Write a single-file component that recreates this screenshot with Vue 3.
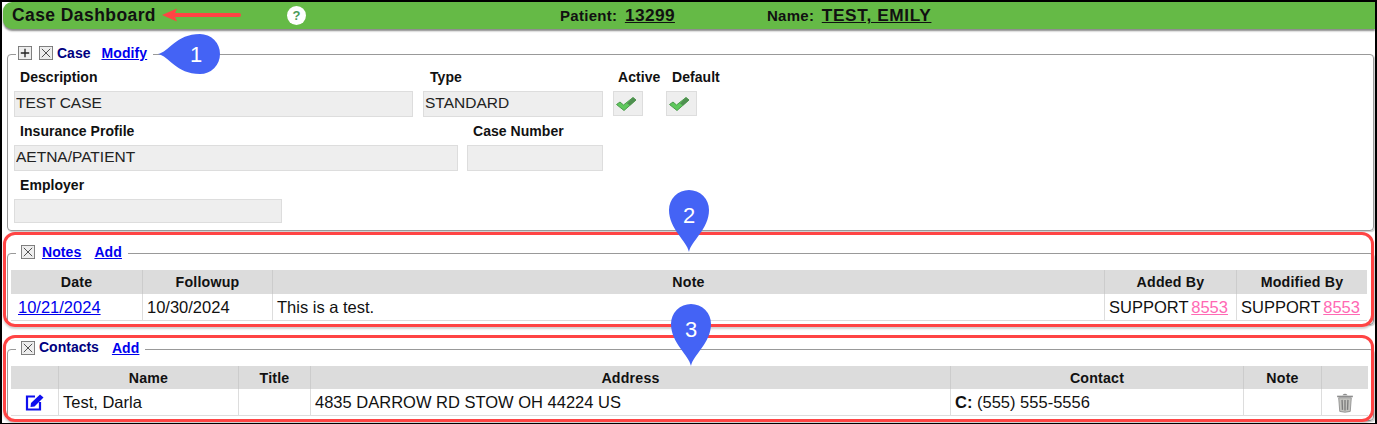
<script setup>
const notes = [{ date: '10/21/2024', followup: '10/30/2024', note: 'This is a test.', added: 'SUPPORT', modified: 'SUPPORT', id: '8553' }]
const contacts = [{ name: 'Test, Darla', title: '', address: '4835 DARROW RD STOW OH 44224 US', phone: '(555) 555-5556', note: '' }]
</script>

<template>
  <div class="frame">
    <header class="topbar">
      <h1 class="title">Case Dashboard</h1>
      <svg class="arrow" width="82" height="14" viewBox="0 0 82 14">
        <path d="M1 7 L16 .5 L14 5 H78 a2 2 0 0 1 0 4 H14 L16 13.500 Z" fill="#ff4444" />
      </svg>
      <span class="help">?</span>
      <span class="patient">Patient: <u class="big">13299</u></span>
      <span class="name">Name: <u class="big wide">TEST, EMILY</u></span>
    </header>

    <fieldset class="box case">
      <legend class="legend lg-case">
        <svg class="tog" width="14" height="14" viewBox="0 0 15 15">
          <rect x=".5" y=".5" width="14" height="14" fill="#eee" stroke="#777" />
          <path d="M7.500 3v9M3 7.500h9" stroke="#222" stroke-width="1.400" />
        </svg>
        <svg class="tog second" width="14" height="14" viewBox="0 0 15 15">
          <rect x=".5" y=".5" width="14" height="14" fill="#eee" stroke="#777" />
          <path d="M3 3l9 9M12 3l-9 9" stroke="#444" stroke-width="1" />
        </svg>
        <b class="lg-title">Case</b>
        <a class="lg-link first">Modify</a>
      </legend>
      <div class="form-row">
        <label class="field w399"><span>Description</span><input readonly value="TEST CASE" /></label>
        <label class="field w180 type"><span>Type</span><input readonly value="STANDARD" /></label>
        <div class="field w30 active"><span>Active</span>
          <div class="checkbox">
            <svg width="22" height="16" viewBox="0 0 22 16">
              <path d="M1.500 8.500 L5 6 L8.500 9 L18 1.500 L21 4 L9 14.500 Z" fill="#5ec85c" stroke="#4d9a4c" stroke-width="1" />
              <path d="M12 7.500 L18 1.500 L21 4 L15 9.500 Z" fill="#4f8f50" />
            </svg>
          </div>
        </div>
        <div class="field w31 default"><span>Default</span>
          <div class="checkbox">
            <svg width="22" height="16" viewBox="0 0 22 16">
              <path d="M1.500 8.500 L5 6 L8.500 9 L18 1.500 L21 4 L9 14.500 Z" fill="#5ec85c" stroke="#4d9a4c" stroke-width="1" />
              <path d="M12 7.500 L18 1.500 L21 4 L15 9.500 Z" fill="#4f8f50" />
            </svg>
          </div>
        </div>
      </div>
      <div class="form-row">
        <label class="field w444"><span>Insurance Profile</span><input readonly value="AETNA/PATIENT" /></label>
        <label class="field w136 casenum"><span>Case Number</span><input readonly value="" /></label>
      </div>
      <div class="form-row last">
        <label class="field w268"><span>Employer</span><input class="short" readonly value="" /></label>
      </div>
    </fieldset>

    <fieldset class="box notes">
      <legend class="legend solo">
        <svg class="tog" width="14" height="14" viewBox="0 0 15 15">
          <rect x=".5" y=".5" width="14" height="14" fill="#eee" stroke="#777" />
          <path d="M3 3l9 9M12 3l-9 9" stroke="#444" stroke-width="1" />
        </svg>
        <a class="lg-link notes-link">Notes</a>
        <a class="lg-link add">Add</a>
      </legend>
      <table class="grid">
        <colgroup>
          <col class="n1" /><col class="n2" /><col /><col class="n4" /><col class="n5" />
        </colgroup>
        <thead>
          <tr><th>Date</th><th>Followup</th><th>Note</th><th>Added By</th><th>Modified By</th></tr>
        </thead>
        <tbody>
          <tr v-for="n in notes" :key="n.date">
            <td class="date-cell"><a class="date">{{ n.date }}</a></td>
            <td>{{ n.followup }}</td>
            <td>{{ n.note }}</td>
            <td>{{ n.added }} <a class="pink">{{ n.id }}</a></td>
            <td>{{ n.modified }} <a class="pink">{{ n.id }}</a></td>
          </tr>
        </tbody>
      </table>
    </fieldset>

    <fieldset class="box contacts">
      <legend class="legend solo">
        <svg class="tog" width="14" height="14" viewBox="0 0 15 15">
          <rect x=".5" y=".5" width="14" height="14" fill="#eee" stroke="#777" />
          <path d="M3 3l9 9M12 3l-9 9" stroke="#444" stroke-width="1" />
        </svg>
        <b class="lg-title raised">Contacts</b>
        <a class="lg-link add">Add</a>
      </legend>
      <table class="grid tall">
        <colgroup>
          <col class="c1" /><col class="c2" /><col class="c3" /><col class="c4" /><col class="c5" /><col class="c6" /><col />
        </colgroup>
        <thead>
          <tr><th></th><th>Name</th><th>Title</th><th>Address</th><th>Contact</th><th>Note</th><th></th></tr>
        </thead>
        <tbody>
          <tr v-for="c in contacts" :key="c.name">
            <td class="center icon-cell">
              <svg width="20" height="18" viewBox="0 0 20 18">
                <path d="M10 3.500 H2 V16.500 H15 V9" fill="none" stroke="#0f0fee" stroke-width="2.200" />
                <path d="M6 10 L15 1.500 L18.500 4.500 L9.500 13.500 L5.500 14 Z" fill="#0f0fee" />
              </svg>
            </td>
            <td>{{ c.name }}</td>
            <td>{{ c.title }}</td>
            <td>{{ c.address }}</td>
            <td><b>C:</b> {{ c.phone }}</td>
            <td>{{ c.note }}</td>
            <td class="center icon-cell">
              <svg width="20" height="21" viewBox="0 0 18 20">
                <path d="M1.500 3.500 H16.500 V5 H1.500 Z" fill="#8d8d8d" />
                <path d="M6.500 3 Q9 .5 11.500 3 Z" fill="#8d8d8d" />
                <path d="M3 5.500 H15 L14 18.500 Q9 20 4 18.500 Z" fill="#c4c4c0" stroke="#8c8c8c" stroke-width=".8" />
                <path d="M6.200 7.500 L6.600 17 M9 7.500 V17.500 M11.800 7.500 L11.400 17" stroke="#7d7d7d" stroke-width="1.300" />
              </svg>
            </td>
          </tr>
        </tbody>
      </table>
    </fieldset>

    <div class="redbox red1"></div>
    <div class="redbox red2"></div>

    <svg class="pin pin1" width="64" height="42" viewBox="0 0 64 42">
      <path d="M1 21 C12 19 19 1 43 1 A20 20 0 0 1 43 41 C19 41 12 23 1 21 Z" fill="#4463f5" />
      <text x="39" y="29" text-anchor="middle" class="pin-num">1</text>
    </svg>
    <svg class="pin pin2" width="42" height="64" viewBox="0 0 42 64">
      <path d="M21 63 C19 52 1 40 1 21 A20 20 0 0 1 41 21 C41 40 23 52 21 63 Z" fill="#4463f5" />
      <text x="21" y="34" text-anchor="middle" class="pin-num">2</text>
    </svg>
    <svg class="pin pin3" width="42" height="64" viewBox="0 0 42 64">
      <path d="M21 63 C19 52 1 40 1 21 A20 20 0 0 1 41 21 C41 40 23 52 21 63 Z" fill="#4463f5" />
      <text x="21" y="34" text-anchor="middle" class="pin-num">3</text>
    </svg>
  </div>
</template>

<style>
html, body { margin: 0; background: #fff; }
</style>

<style scoped>
.frame {
  position: relative;
  box-sizing: border-box;
  width: 1377px;
  height: 424px;
  overflow: hidden;
  border: 2px solid #000;
  border-bottom-width: 1px;
  background: #fff;
  font-family: "Liberation Sans", Arial, sans-serif;
  color: #111;
}
.topbar {
  display: flex;
  align-items: center;
  height: 27px;
  margin-left: 1px;
  padding-left: 9px;
  background: #65ba46;
  border-radius: 9px 0 0 9px;
  box-shadow: 0 2px 2px #888;
  font-weight: bold;
  font-size: 15px;
  letter-spacing: .3px;
}
.title { margin: 0; width: 144px; font-size: 17.500px; letter-spacing: .42px; white-space: nowrap; }
.arrow { margin: -2px 0 0 5px; }
.help {
  display: flex;
  align-items: center;
  justify-content: center;
  width: 19px;
  height: 19px;
  margin-left: 44px;
  border-radius: 50%;
  background: #fff;
  color: #4a9a5a;
  font-size: 13px;
}
.patient { margin-left: 254px; }
.name { margin-left: 92px; }
.big { margin-left: 3px; font-size: 17.300px; letter-spacing: .4px; }
.wide { letter-spacing: .6px; }

.box {
  margin: 0 1px 0 5px;
  padding: 0;
  border: 1px solid #999;
  border-radius: 4px;
  min-width: 0;
  box-shadow: 1px 1px 1px #ccc;
}
.case { margin-top: 17px; height: 185px; box-sizing: border-box; padding: 5px 0 0 6px; }
.notes { margin-top: 14px; height: 80px; box-sizing: border-box; padding: 9px 6px 0 3px; }
.contacts { margin-top: 16px; height: 80px; box-sizing: border-box; padding: 9px 5px 0 3px; }

.legend {
  display: flex;
  align-items: center;
  height: 16px;
  margin-left: 5px;
  padding: 0 6px 0 5px;
  font-size: 14px;
}
.lg-case { margin-left: 2px; padding-left: 2px; }
.tog { flex: none; margin-top: -2px; }
.second { margin-left: 7px; }
.lg-title { margin: -2px 0 0 4px; color: #000080; }
.raised { margin-top: -4px; }
.lg-link { margin-top: -2px; color: #0000ee; font-size: 14px; letter-spacing: .1px; font-weight: bold; text-decoration: underline; }
.first { margin-left: 11px; }
.notes-link { margin-left: 7px; }
.add { margin-left: 13px; }

.form-row { display: flex; }
.field { display: flex; flex-direction: column; flex: none; }
.field span {
  height: 20px;
  line-height: 21px;
  padding-left: 6px;
  font-size: 14px;
  font-weight: bold;
  letter-spacing: .05px;
  white-space: nowrap;
}
.field input {
  box-sizing: border-box;
  display: block;
  width: 100%;
  height: 26px;
  margin: 4px 0;
  padding: 0 1px 3px;
  border: 1px solid #ddd;
  background: #eee;
  font: 15.500px "Liberation Sans", Arial, sans-serif;
  color: #222;
  outline: none;
}
.field input.short { height: 24px; margin-bottom: 0; }
.w399 { width: 399px; }
.w180 { width: 180px; }
.w30 { width: 30px; }
.w31 { width: 31px; }
.w444 { width: 444px; }
.w136 { width: 136px; }
.w268 { width: 268px; }
.type { margin-left: 10px; }
.type span { padding-left: 7px; }
.active { margin-left: 10px; }
.default { margin-left: 23px; }
.casenum { margin-left: 9px; }
.active span { padding-left: 5px; }
.default span { padding-left: 6px; }
.checkbox {
  box-sizing: border-box;
  display: flex;
  align-items: center;
  justify-content: center;
  height: 25px;
  margin-top: 4px;
  border: 1px solid #ddd;
  background: #eee;
  padding-right: 5px;
}

.grid {
  width: 1356px;
  border-collapse: separate;
  border-spacing: 0;
  table-layout: fixed;
  font-size: 16.500px;
}
.tall { width: 1357px; }
.grid th {
  height: 24px;
  padding: 0;
  background: #dcdcdc;
  border-right: 1px solid #ccc;
  font-size: 14.200px;
  letter-spacing: .2px;
}
.tall th { height: 23px; }
.grid th:last-child, .grid td:last-child { border-right: none; }
.grid td {
  height: 27px;
  box-sizing: border-box;
  padding: 0 4px;
  border-right: 1px solid #ddd;
  border-bottom: 1px solid #ddd;
  white-space: nowrap;
  overflow: hidden;
}
.grid .center { text-align: center; }
.grid .date-cell { padding-left: 7px; }
.icon-cell svg { display: block; margin: 0 auto; }
.date { color: #0000ee; text-decoration: underline; }
.pink { margin-left: -1.500px; color: #ff69b4; text-decoration: underline; }
.n1 { width: 132px; }
.n2 { width: 130px; }
.n4 { width: 132px; }
.n5 { width: 130px; }
.c1 { width: 48px; }
.c2 { width: 180px; }
.c3 { width: 72px; }
.c4 { width: 640px; }
.c5 { width: 293px; }
.c6 { width: 78px; }

.redbox {
  position: absolute;
  left: 1px;
  width: 1371px;
  box-sizing: border-box;
  border: 3px solid #ff4444;
  border-radius: 12px;
  box-shadow: 0 2px 2px rgba(0, 0, 0, .18);
  pointer-events: none;
}
.red1 { top: 230px; height: 95px; }
.red2 { top: 333px; height: 87px; }
.pin { position: absolute; }
.pin1 { left: 155px; top: 31px; }
.pin2 { left: 666px; top: 187px; }
.pin3 { left: 668px; top: 301px; }
.pin-num { font: 22px "Liberation Sans", Arial, sans-serif; fill: #fff; }
</style>
